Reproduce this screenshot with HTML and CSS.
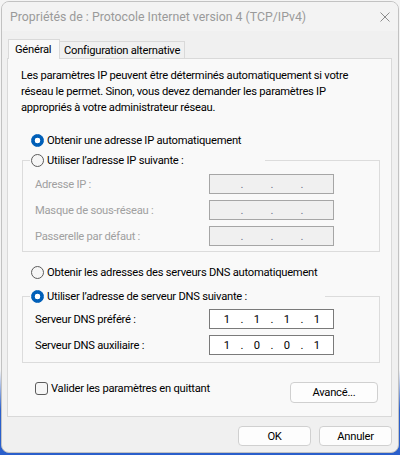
FILE: index.html
```html
<!DOCTYPE html>
<html lang="fr">
<head>
    <meta charset="UTF-8">
    <meta name="viewport" content="width=device-width, initial-scale=1.0">
    <title>Propriétés de : Protocole Internet version 4 (TCP/IPv4)</title>
    <link rel="stylesheet" href="styles.css">
</head>
<body>
    <div class="window">
        <!-- Title bar -->
        <div class="titlebar">
            <span class="title">Propriétés de : Protocole Internet version 4 (TCP/IPv4)</span>
            <svg class="close" width="10" height="10" viewBox="0 0 10 10">
                <path d="M0.5 0.5 L9.5 9.5 M9.5 0.5 L0.5 9.5" stroke="#8c8c8c" stroke-width="1" fill="none"/>
            </svg>
        </div>

        <!-- Tabs -->
        <div class="tabs">
            <div class="tab active">Général</div>
            <div class="tab">Configuration alternative</div>
        </div>

        <div class="panel">
            <p class="intro">Les paramètres IP peuvent être déterminés automatiquement si votre<br>réseau le permet. Sinon, vous devez demander les paramètres IP<br>appropriés à votre administrateur réseau.</p>

            <label class="option option-top"><input type="radio" name="ip" checked>Obtenir une adresse IP automatiquement</label>

            <fieldset class="group group-ip disabled">
                <legend><label class="option"><input type="radio" name="ip">Utiliser l’adresse IP suivante :</label></legend>
                <div class="fields">
                    <span class="field-label">Adresse IP :</span>
                    <div class="ip"><span></span><i>.</i><span></span><i>.</i><span></span><i>.</i><span></span></div>
                    <span class="field-label">Masque de sous-réseau :</span>
                    <div class="ip"><span></span><i>.</i><span></span><i>.</i><span></span><i>.</i><span></span></div>
                    <span class="field-label">Passerelle par défaut :</span>
                    <div class="ip"><span></span><i>.</i><span></span><i>.</i><span></span><i>.</i><span></span></div>
                </div>
            </fieldset>

            <label class="option option-dns"><input type="radio" name="dns">Obtenir les adresses des serveurs DNS automatiquement</label>

            <fieldset class="group group-dns">
                <legend><label class="option"><input type="radio" name="dns" checked>Utiliser l’adresse de serveur DNS suivante :</label></legend>
                <div class="fields">
                    <span class="field-label">Serveur DNS préféré :</span>
                    <div class="ip"><span>1</span><i>.</i><span>1</span><i>.</i><span>1</span><i>.</i><span>1</span></div>
                    <span class="field-label">Serveur DNS auxiliaire :</span>
                    <div class="ip"><span>1</span><i>.</i><span>0</span><i>.</i><span>0</span><i>.</i><span>1</span></div>
                </div>
            </fieldset>

            <div class="panel-footer">
                <label class="check"><input type="checkbox">Valider les paramètres en quittant</label>
                <button class="btn btn-advanced">Avancé...</button>
            </div>
        </div>

        <div class="actions">
            <button class="btn">OK</button>
            <button class="btn">Annuler</button>
        </div>
    </div>
</body>
</html>
```
FILE: styles.css
```css
/* General */
body {
    margin: 0;
    height: 455px;
    font-family: 'Roboto', 'Liberation Sans', sans-serif;
    font-size: 11.2px;
    letter-spacing: -0.25px;
    color: #000;
    background: linear-gradient(#f4f4f4 0, #f4f4f4 370px, #2a5fcb 410px);
    overflow: hidden;
}

.window {
    box-sizing: border-box;
    width: 398px;
    height: 452px;
    margin: 1px 0 0 1px;
    border: 1px solid #c2c2c2;
    border-radius: 8px;
    background-color: #f0f0f0;
    overflow: hidden;
}

/* Title bar */
.titlebar {
    height: 29px;
    display: flex;
    align-items: center;
    justify-content: space-between;
    padding-left: 8px;
    background-color: #f3f3f3;
}
.title {
    font-size: 12.3px;
    letter-spacing: 0;
    color: #9a9a9a;
}
.close {
    margin-right: 8px;
}

/* Tabs */
.tabs {
    display: flex;
    align-items: flex-end;
    height: 19px;
    padding: 8px 0 0 6px;
}
.tab {
    box-sizing: border-box;
    height: 17px;
    padding: 0 4px;
    display: flex;
    align-items: center;
    border: 1px solid #d9d9d9;
    border-bottom: none;
    border-left: none;
    background-color: #f0f0f0;
}
.tab.active {
    height: 20px;
    width: 52px;
    margin-bottom: -1px;
    padding: 0 0 1px 6px;
    border-left: 1px solid #d9d9d9;
    background-color: #f9f9f9;
    position: relative;
    z-index: 1;
}

/* Panel */
.panel {
    box-sizing: border-box;
    width: 385px;
    height: 359px;
    margin-left: 5px;
    border: 1px solid #d9d9d9;
    background-color: #f9f9f9;
}
.intro {
    margin: 9px 0 0 13px;
    line-height: 16px;
}

/* Radio and check options */
.option, .check {
    display: flex;
    align-items: center;
    gap: 3px;
    height: 14px;
    white-space: nowrap;
}
.option-top {
    margin: 17px 0 0 23px;
}
.option-dns {
    margin: 13px 0 0 23px;
}
input[type="radio"], input[type="checkbox"] {
    appearance: none;
    box-sizing: border-box;
    width: 13px;
    height: 13px;
    margin: 0;
    border: 1px solid #5c5c5c;
    background-color: #f6f6f6;
    flex: none;
}
input[type="radio"] {
    border-radius: 50%;
}
input[type="radio"]:checked {
    border-color: #005fb8;
    background: radial-gradient(circle, #fff 0, #fff 2.6px, #005fb8 3.1px);
}
input[type="checkbox"] {
    border-radius: 3px;
}

/* Group boxes */
.group {
    box-sizing: border-box;
    width: 358px;
    margin: 6px 0 0 14px;
    padding: 7px 0 5px 12px;
    border: 1px solid #dcdcdc;
    min-inline-size: 0;
}
.group legend {
    padding: 0 0 0 1px;
    margin-left: -5px;
    width: 235px;
    box-sizing: border-box;
}
.group-dns {
    margin-top: 10px;
    padding: 6px 0 7px 12px;
}
.group-dns legend {
    width: 295px;
}
.fields {
    display: grid;
    grid-template-columns: 174px 125px;
    grid-auto-rows: 20px;
    row-gap: 6px;
    align-items: center;
}
.disabled .field-label {
    color: #a0a0a0;
}

/* IP address boxes */
.ip {
    box-sizing: border-box;
    height: 20px;
    display: flex;
    align-items: center;
    padding-left: 5px;
    border: 1px solid #7a7a7a;
    background-color: #fff;
    letter-spacing: 0;
}
.ip span {
    width: 24px;
    text-align: center;
}
.ip i {
    width: 6px;
    text-align: center;
    font-style: normal;
}
.disabled .ip {
    border-color: #a6a6a6;
    background-color: #f0f0f0;
    color: #70708a;
}

/* Footer of the panel */
.panel-footer {
    display: flex;
    justify-content: space-between;
    align-items: flex-start;
    margin: 18px 13px 0 27px;
}

/* Buttons */
.btn {
    box-sizing: border-box;
    width: 73px;
    height: 20px;
    padding: 0;
    font-family: inherit;
    font-size: inherit;
    letter-spacing: inherit;
    color: #000;
    background-color: #fdfdfd;
    border: 1px solid #d0d0d0;
    border-radius: 4px;
}
.btn-advanced {
    width: 88px;
    height: 21px;
    margin-top: 1px;
}
.actions {
    display: flex;
    justify-content: flex-end;
    gap: 8px;
    margin-top: 9px;
    padding-right: 6px;
}
```
